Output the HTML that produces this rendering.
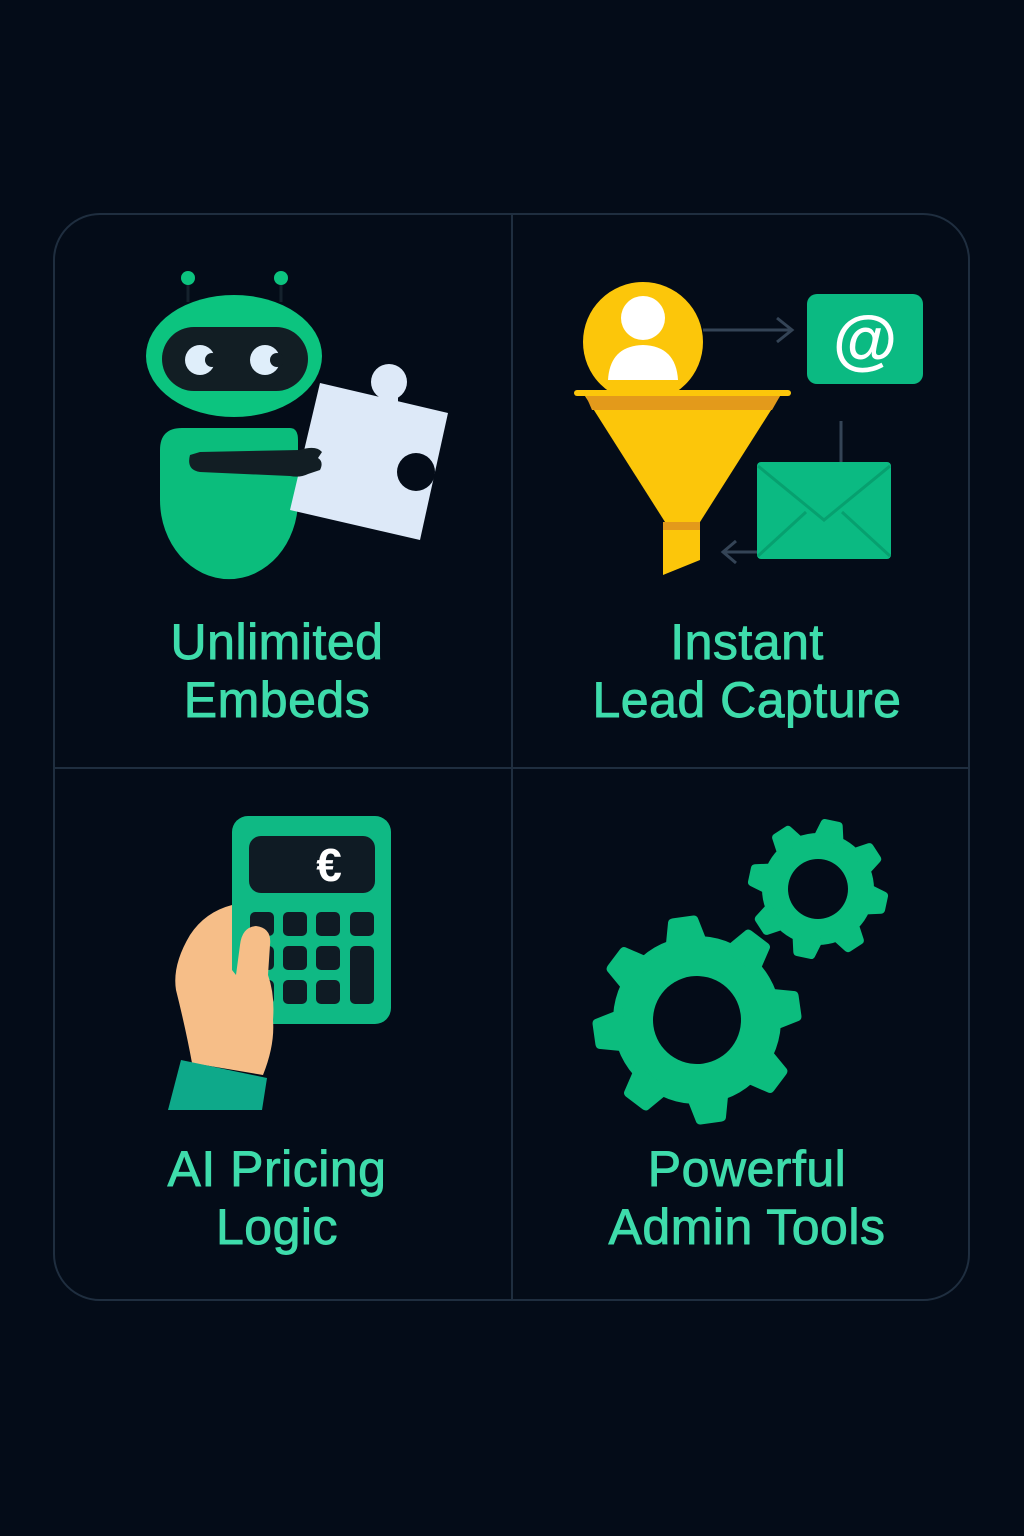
<!DOCTYPE html>
<html><head><meta charset="utf-8"><style>
html,body{margin:0;padding:0;background:#040c18;}
body{width:1024px;height:1536px;position:relative;overflow:hidden;font-family:"Liberation Sans",sans-serif;}
.t{position:absolute;width:458px;text-align:center;color:#3edcab;font-size:50px;line-height:58px;-webkit-text-stroke:0.9px #3edcab;letter-spacing:0.5px;}
svg{position:absolute;left:0;top:0;}
</style></head><body>
<svg width="1024" height="1536" viewBox="0 0 1024 1536">
<rect x="54" y="214" width="915" height="1086" rx="46" fill="none" stroke="#1f2e3f" stroke-width="2"/>
<line x1="512" y1="214" x2="512" y2="1300" stroke="#1f2e3f" stroke-width="2"/>
<line x1="54" y1="768" x2="969" y2="768" stroke="#1f2e3f" stroke-width="2"/>

<!-- robot -->
<line x1="188" y1="280" x2="188" y2="302" stroke="#15222d" stroke-width="3"/>
<line x1="281" y1="280" x2="281" y2="302" stroke="#15222d" stroke-width="3"/>
<circle cx="188" cy="278" r="7" fill="#0cc47f"/>
<circle cx="281" cy="278" r="7" fill="#0cc47f"/>
<ellipse cx="234" cy="356" rx="88" ry="61" fill="#0cc47f"/>
<rect x="162" y="327" width="146" height="64" rx="32" fill="#121e24"/>
<circle cx="200" cy="360" r="15" fill="#dfeefa"/>
<circle cx="212" cy="360" r="7" fill="#121e24"/>
<circle cx="265" cy="360" r="15" fill="#dfeefa"/>
<circle cx="277" cy="360" r="7" fill="#121e24"/>
<path d="M182 428 H290 Q298 428 298 440 V500 A68 78 0 0 1 160 500 V450 Q160 428 182 428Z" fill="#0bbd7c"/>
<path d="M320 383 L448 413 L420 540 L290 510Z" fill="#dde9f8"/>
<rect x="380" y="385" width="18" height="18" fill="#dde9f8"/>
<circle cx="389" cy="382" r="18" fill="#dde9f8"/>
<circle cx="416" cy="472" r="19" fill="#040c18"/>
<path d="M190 455 Q186 470 200 472 L290 476 Q300 478 308 474 L320 470 Q324 462 318 458 L322 452 Q316 445 300 450 L200 452Z" fill="#121e24"/>

<!-- funnel -->
<circle cx="643" cy="342" r="60" fill="#fcc60a"/>
<circle cx="643" cy="318" r="22" fill="#fff"/>
<path d="M608 380 Q610 346 643 345 Q676 346 678 380Z" fill="#fff"/>
<path d="M585 396 L780 396 L700 522 L665 522Z" fill="#fcc60a"/>
<path d="M586 396 L780 396 L772 410 L592 410Z" fill="#e39a1b"/>
<rect x="574" y="390" width="217" height="6" rx="3" fill="#fcc60a"/>
<path d="M663 522 L700 522 L700 560 L663 575Z" fill="#fcc60a"/>
<rect x="663" y="522" width="37" height="8" fill="#e39a1b"/>
<path d="M703 330 H790 M777 318 L792 330 L777 342" stroke="#344456" stroke-width="3" fill="none"/>
<rect x="807" y="294" width="116" height="90" rx="10" fill="#0bba82"/>
<text x="865" y="362" text-anchor="middle" font-family="Liberation Sans" font-weight="bold" font-size="66" fill="#fff">@</text>
<line x1="841" y1="421" x2="841" y2="463" stroke="#344456" stroke-width="3"/>
<rect x="757" y="462" width="134" height="97" rx="4" fill="#0bba82"/>
<path d="M758 466 L824 520 L890 466 M758 556 L806 512 M890 556 L842 512" stroke="#07a06f" stroke-width="3" fill="none"/>
<path d="M757 552 H724 M736 541 L723 552 L736 563" stroke="#344456" stroke-width="3" fill="none"/>

<!-- calculator -->
<rect x="232" y="816" width="159" height="208" rx="16" fill="#0fb984"/>
<rect x="249" y="836" width="126" height="57" rx="12" fill="#0f1b24"/>
<text x="329" y="881" text-anchor="middle" font-family="Liberation Sans" font-weight="bold" font-size="46" fill="#fff">€</text>
<g fill="#0f1b24">
<rect x="250" y="912" width="24" height="24" rx="5"/><rect x="283" y="912" width="24" height="24" rx="5"/><rect x="316" y="912" width="24" height="24" rx="5"/><rect x="350" y="912" width="24" height="24" rx="5"/>
<rect x="250" y="946" width="24" height="24" rx="5"/><rect x="283" y="946" width="24" height="24" rx="5"/><rect x="316" y="946" width="24" height="24" rx="5"/><rect x="350" y="946" width="24" height="58" rx="5"/>
<rect x="250" y="980" width="24" height="24" rx="5"/><rect x="283" y="980" width="24" height="24" rx="5"/><rect x="316" y="980" width="24" height="24" rx="5"/>
</g>
<path d="M232 905 Q205 912 190 935 Q172 965 176 990 Q186 1030 192 1063 L263 1075 Q275 1045 273 1020 Q275 995 268 975 L270 945 Q272 928 256 926 Q242 927 240 945 L236 975 L232 970Z" fill="#f6be88"/>
<path d="M181 1060 L267 1078 L262 1110 L168 1110Z" fill="#0ea98a"/>

<!-- gears -->
<g fill="#0cbd7e">
<g transform="translate(697,1020) rotate(-8)">
<circle r="84"/>
<g id="bt"><path d="M-22 -72 L-15 -101 Q-14 -104 -10 -104 L10 -104 Q14 -104 15 -101 L22 -72Z"/></g>
<use href="#bt" transform="rotate(45)"/><use href="#bt" transform="rotate(90)"/><use href="#bt" transform="rotate(135)"/><use href="#bt" transform="rotate(180)"/><use href="#bt" transform="rotate(225)"/><use href="#bt" transform="rotate(270)"/><use href="#bt" transform="rotate(315)"/>
<circle r="44" fill="#040c18"/>
</g>
<g transform="translate(818,889) rotate(12)">
<circle r="56"/>
<g id="st"><path d="M-16 -48 L-11 -67 Q-10 -70 -7 -70 L7 -70 Q10 -70 11 -67 L16 -48Z"/></g>
<use href="#st" transform="rotate(45)"/><use href="#st" transform="rotate(90)"/><use href="#st" transform="rotate(135)"/><use href="#st" transform="rotate(180)"/><use href="#st" transform="rotate(225)"/><use href="#st" transform="rotate(270)"/><use href="#st" transform="rotate(315)"/>
<circle r="30" fill="#040c18"/>
</g>
</g>
</svg>
<div class="t" style="left:48px;top:613px;">Unlimited<br>Embeds</div>
<div class="t" style="left:518px;top:613px;">Instant<br>Lead Capture</div>
<div class="t" style="left:48px;top:1140px;">AI Pricing<br>Logic</div>
<div class="t" style="left:518px;top:1140px;">Powerful<br>Admin Tools</div>
</body></html>
